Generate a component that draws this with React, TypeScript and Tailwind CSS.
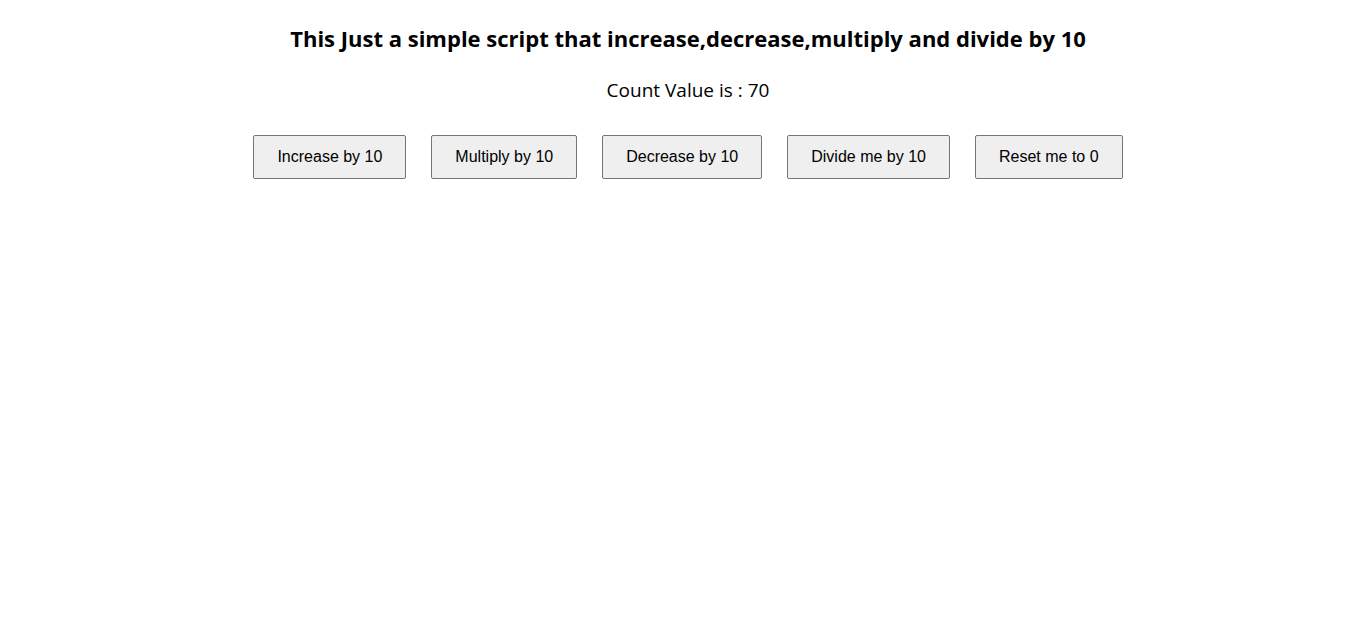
import React, { useState } from "react";

export default function App() {
  const [count, setCount] = useState(70);

  const btn =
    "h-[44px] px-[23px] bg-[#efefef] border border-[#767676] rounded-[2px] text-[16px] text-black [font-family:'Liberation_Sans',Arial,sans-serif] hover:bg-[#e5e5e5]";

  return (
    <div className="min-h-screen bg-white text-black flex flex-col items-center pl-[14px] [font-family:'Open_Sans','Noto_Sans',sans-serif]">
      <h1 className="mt-[24px] text-[22px] font-bold leading-[28px]">
        This Just a simple script that increase,decrease,multiply and divide by 10
      </h1>
      <p className="mt-[25px] text-[19px] leading-[26px]">Count Value is : {count}</p>
      <div className="mt-[32px] flex gap-[25px]">
        <button className={btn} onClick={() => setCount((c) => c + 10)}>
          Increase by 10
        </button>
        <button className={btn} onClick={() => setCount((c) => c * 10)}>
          Multiply by 10
        </button>
        <button className={btn} onClick={() => setCount((c) => c - 10)}>
          Decrease by 10
        </button>
        <button className={btn} onClick={() => setCount((c) => c / 10)}>
          Divide me by 10
        </button>
        <button className={btn} onClick={() => setCount(0)}>
          Reset me to 0
        </button>
      </div>
    </div>
  );
}
